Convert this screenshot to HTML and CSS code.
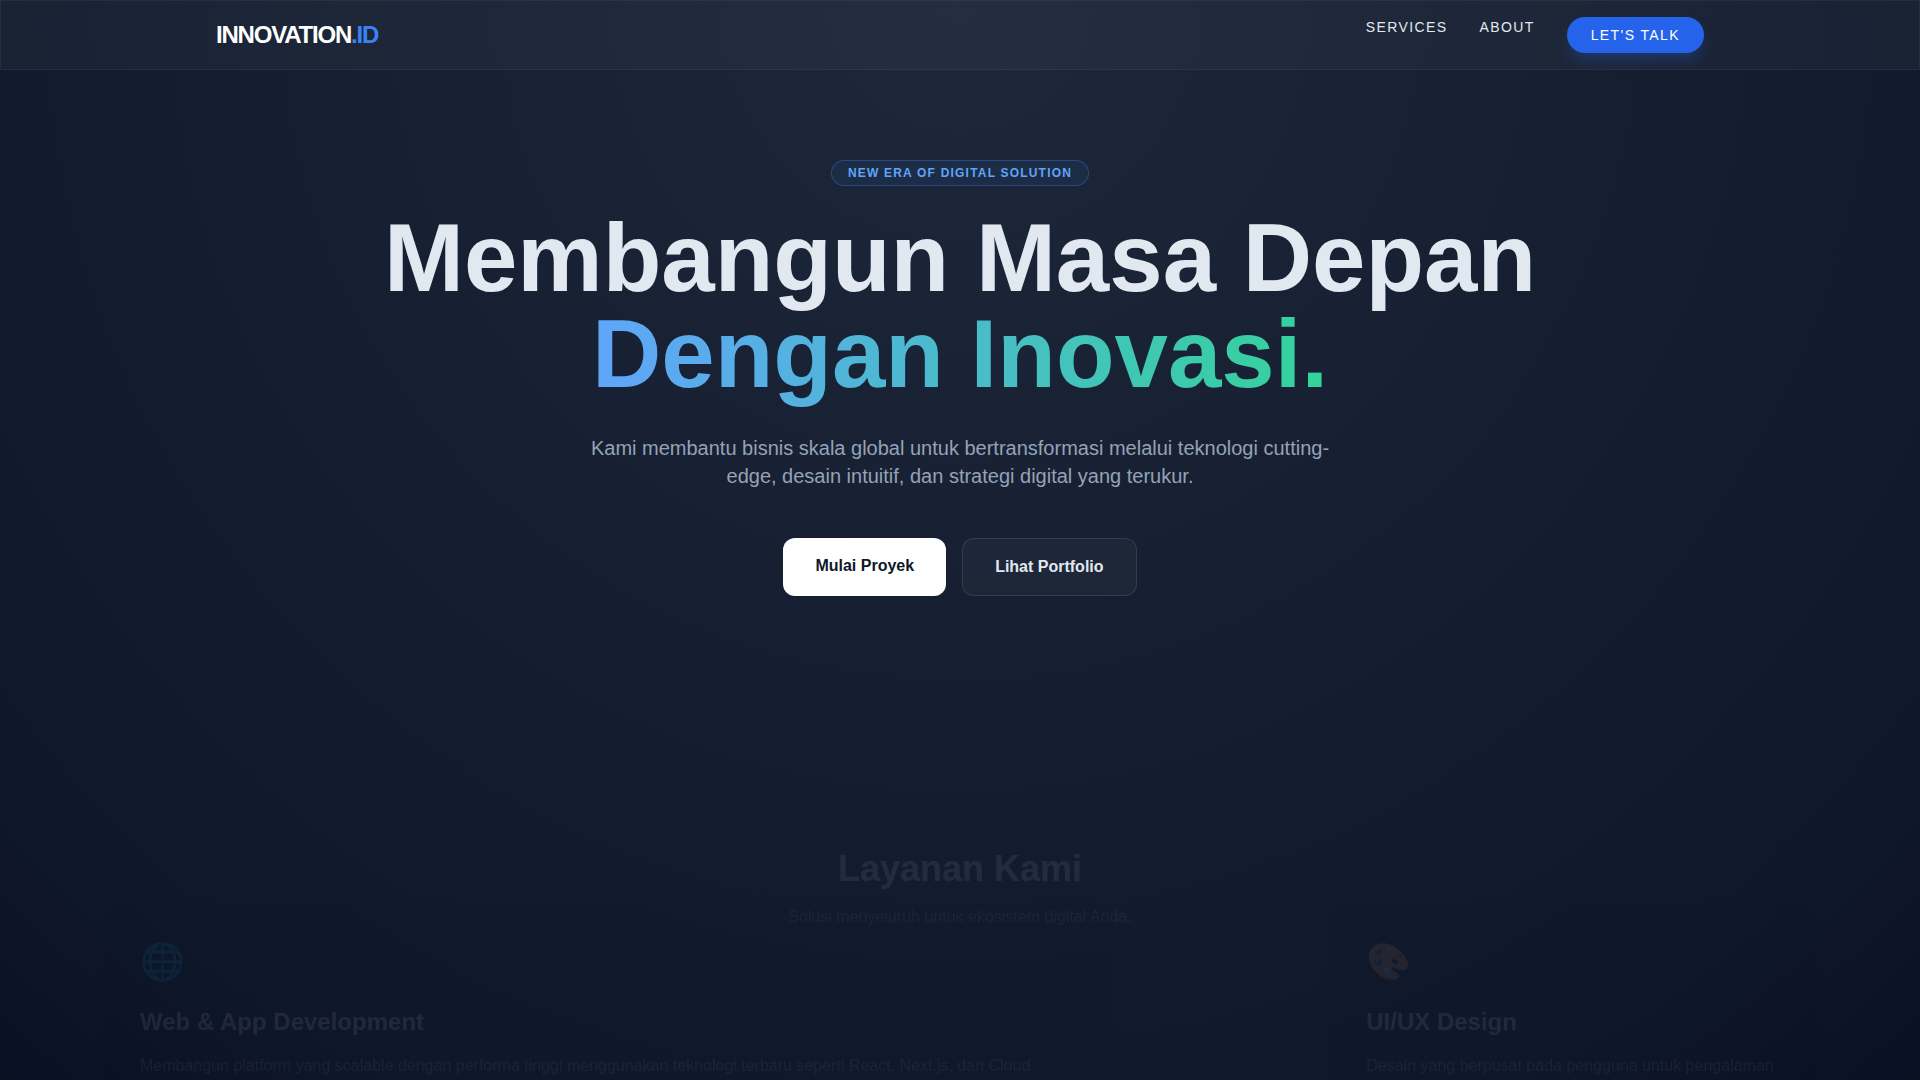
FILE: index.html
```html
<!DOCTYPE html>
<html lang="id">
<head>
<meta charset="utf-8">
<meta name="viewport" content="width=device-width, initial-scale=1">
<title>Innovation.id</title>
<link rel="stylesheet" href="styles.css">
</head>
<body>
<header class="navbar">
  <div class="navbar-inner">
    <a class="logo" href="#">INNOVATION<span class="logo-accent">.ID</span></a>
    <nav class="menu">
      <a class="menu-link" href="#services">Services</a>
      <a class="menu-link" href="#about">About</a>
      <a class="menu-link menu-cta" href="#contact">Let's Talk</a>
    </nav>
  </div>
</header>
<main>
  <section class="hero">
    <span class="badge">New Era of Digital Solution</span>
    <h1 class="hero-title">Membangun Masa Depan<br><span class="hero-accent">Dengan Inovasi.</span></h1>
    <p class="hero-text">Kami membantu bisnis skala global untuk bertransformasi melalui teknologi cutting-edge, desain intuitif, dan strategi digital yang terukur.</p>
    <div class="actions">
      <button class="btn btn-primary" type="button">Mulai Proyek</button>
      <button class="btn btn-glass" type="button">Lihat Portfolio</button>
    </div>
  </section>
  <section class="services" id="services">
    <div class="services-head">
      <h2 class="services-title">Layanan Kami</h2>
      <p class="services-text">Solusi menyeluruh untuk ekosistem digital Anda.</p>
    </div>
    <div class="cards">
      <article class="card">
        <div class="card-icon" aria-hidden="true">🌐</div>
        <h3 class="card-title">Web &amp; App Development</h3>
        <p class="card-text">Membangun platform yang scalable dengan performa tinggi menggunakan teknologi terbaru seperti React, Next.js, dan Cloud</p>
      </article>
      <article class="card">
        <div class="card-icon" aria-hidden="true">🎨</div>
        <h3 class="card-title">UI/UX Design</h3>
        <p class="card-text">Desain yang berpusat pada pengguna untuk pengalaman</p>
      </article>
    </div>
  </section>
</main>
</body>
</html>
```
FILE: styles.css
```css
* {
  box-sizing: border-box;
  margin: 0;
}

html {
  background: #0b0f21;
}

body {
  min-height: 100vh;
  overflow: hidden;
  background: radial-gradient(circle at top, #1d283a 0%, #0f172a 84%, #0a0f22 100%);
  color: #e2e8f0;
  font: 16px/24px "Liberation Sans", Arial, sans-serif;
}

a {
  color: inherit;
  text-decoration: none;
}

.navbar {
  padding: 16px 24px;
  border: 1px solid rgba(255, 255, 255, 0.05);
  background: rgba(255, 255, 255, 0.03);
}

.navbar-inner {
  display: flex;
  justify-content: space-between;
  align-items: center;
  max-width: 1488px;
  margin: 0 auto;
}

.logo {
  color: #fff;
  font-size: 24px;
  line-height: 32px;
  font-weight: 700;
  letter-spacing: -0.05em;
}

.logo-accent {
  color: #3b82f6;
}

.menu {
  display: flex;
  gap: 32px;
  font-size: 14px;
  line-height: 20px;
  letter-spacing: 0.1em;
  text-transform: uppercase;
}

.menu-cta {
  padding: 8px 24px;
  border-radius: 18px;
  background: #2563eb;
  color: #fff;
  box-shadow: 0 8px 16px -4px rgba(37, 99, 235, 0.35);
}

.hero {
  display: flex;
  flex-direction: column;
  align-items: center;
  padding: 90px 24px 0;
  text-align: center;
}

.badge {
  padding: 4px 16px;
  border: 1px solid rgba(59, 130, 246, 0.35);
  border-radius: 13px;
  background: rgba(59, 130, 246, 0.08);
  color: #60a5fa;
  font-size: 12px;
  line-height: 16px;
  font-weight: 700;
  letter-spacing: 0.1em;
  text-transform: uppercase;
}

.hero-title {
  margin-top: 24px;
  font-size: 96px;
  line-height: 96px;
  font-weight: 700;
}

.hero-accent {
  background: linear-gradient(to right, #60a5fa, #34d399);
  background-clip: text;
  -webkit-background-clip: text;
  color: transparent;
}

.hero-text {
  max-width: 768px;
  margin-top: 32px;
  color: #94a3b8;
  font-size: 20px;
  line-height: 28px;
}

.actions {
  display: flex;
  gap: 16px;
  margin-top: 48px;
}

.btn {
  display: flex;
  padding: 16px 32px;
  border: 0;
  border-radius: 12px;
  font: 700 16px/24px "Liberation Sans", Arial, sans-serif;
}

.btn-primary {
  background: #fff;
  color: #0f172a;
}

.btn-glass {
  border: 1px solid rgba(255, 255, 255, 0.1);
  background: rgba(255, 255, 255, 0.03);
  color: #e2e8f0;
}

.services {
  padding: 253px 99px 0;
}

.services-head {
  text-align: center;
  opacity: 0.08;
}

.services-title {
  font-size: 36px;
  line-height: 40px;
  font-weight: 700;
}

.services-text {
  margin-top: 16px;
  color: #94a3b8;
}

.cards {
  display: grid;
  grid-template-columns: 41fr 20fr;
  gap: 210px;
  margin-top: -28px;
  opacity: 0.08;
}

.card {
  padding: 40px;
  border: 1px solid rgba(255, 255, 255, 0.1);
  border-radius: 24px;
  background: rgba(2, 6, 23, 0.5);
}

.card-icon {
  font-size: 36px;
  line-height: 40px;
}

.card-title {
  margin-top: 24px;
  font-size: 24px;
  line-height: 32px;
  font-weight: 700;
}

.card-text {
  margin-top: 16px;
  color: #94a3b8;
}
```
